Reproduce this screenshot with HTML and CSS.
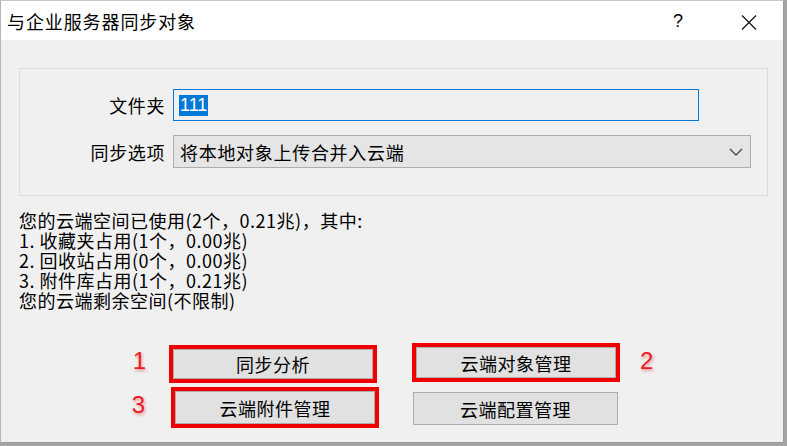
FILE: index.html
```html
<!DOCTYPE html>
<html lang="zh-CN">
<head>
    <meta charset="UTF-8">
    <title>与企业服务器同步对象</title>
    <link rel="stylesheet" href="styles.css">
</head>
<body>
    <div class="dialog">
        <div class="titlebar">
            <span class="title">与企业服务器同步对象</span>
            <span class="help">?</span>
            <span class="close">
                <svg width="16" height="15" viewBox="0 0 16 15">
                    <path d="M1 0.5 L15 14.5 M15 0.5 L1 14.5" stroke="#111" stroke-width="1.2" fill="none"/>
                </svg>
            </span>
        </div>

        <div class="content">
            <div class="group">
                <div class="row">
                    <label class="lbl">文件夹</label>
                    <div class="textbox"><span class="selected">111</span></div>
                </div>
                <div class="row">
                    <label class="lbl">同步选项</label>
                    <div class="combo">
                        <span>将本地对象上传合并入云端</span>
                        <svg class="chev" width="14" height="8" viewBox="0 0 14 8">
                            <path d="M1 1 L7 7 L13 1" stroke="#444" stroke-width="1.3" fill="none"/>
                        </svg>
                    </div>
                </div>
            </div>

            <div class="usage">
                <div>您的云端空间已使用(2个，0.21兆)，其中:</div>
                <div>1. 收藏夹占用(1个，0.00兆)</div>
                <div>2. 回收站占用(0个，0.00兆)</div>
                <div>3. 附件库占用(1个，0.21兆)</div>
                <div>您的云端剩余空间(不限制)</div>
            </div>

            <div class="actions">
                <span class="num n1">1</span>
                <div class="mark m1"><button class="btn">同步分析</button></div>
                <div class="mark m2"><button class="btn">云端对象管理</button></div>
                <span class="num n2">2</span>

                <span class="num n3">3</span>
                <div class="mark m3"><button class="btn">云端附件管理</button></div>
                <button class="btn plain">云端配置管理</button>
            </div>
        </div>
    </div>
</body>
</html>
```

FILE: styles.css
```css
body {
    margin: 0;
    background-color: #a3a3a3;
    font-family: "Noto Sans CJK SC", "Liberation Sans", sans-serif;
    color: #000;
}

.dialog {
    width: 784px;
    height: 443px;
    border: 1px solid #9a9a9a;
    border-left-color: #b5b5b5;
    border-top-color: #c8c8c8;
    background-color: #f0f0f0;
    box-sizing: border-box;
    overflow: hidden;
}

.titlebar {
    height: 39px;
    background-color: #fff;
    display: flex;
    align-items: center;
}

.title {
    flex: 1;
    padding-left: 6px;
    font-size: 18px;
    letter-spacing: 0.9px;
    line-height: 20px;
    margin-top: 1px;
}

.help {
    width: 46px;
    text-align: center;
    font-family: "Liberation Sans", sans-serif;
    font-size: 18px;
    margin-right: 25px;
    margin-top: 2px;
}

.close {
    width: 46px;
    margin-right: 11px;
    display: flex;
    justify-content: center;
    margin-top: 4px;
}

.content {
    padding: 28px 0 0 18px;
}

.group {
    width: 749px;
    height: 128px;
    box-sizing: border-box;
    border: 1px solid #dcdcdc;
    padding-top: 20px;
}

.row {
    display: flex;
    align-items: center;
    margin-bottom: 14px;
}

.lbl {
    width: 145px;
    text-align: right;
    font-size: 18px;
    letter-spacing: 0.6px;
    margin-right: 8px;
}

.textbox {
    width: 526px;
    height: 32px;
    box-sizing: border-box;
    border: 1px solid #0078d7;
    background-color: #f0f0f0;
    padding-left: 5px;
    display: flex;
    align-items: center;
}

.selected {
    background-color: #0078d7;
    color: #fff;
    font-family: "Liberation Sans", sans-serif;
    font-size: 18px;
    line-height: 21px;
    padding: 0 1px;
}

.combo {
    width: 578px;
    height: 33px;
    box-sizing: border-box;
    border: 1px solid #adadad;
    background-color: #e5e5e5;
    padding: 0 7px 0 6px;
    display: flex;
    align-items: center;
    justify-content: space-between;
    font-size: 18px;
    letter-spacing: 0.7px;
}

.usage {
    margin-top: 14px;
    font-size: 18px;
    line-height: 20px;
    letter-spacing: 0.5px;
}

.actions {
    display: grid;
    grid-template-columns: 150px 210px 33px 208px 1fr;
    grid-template-rows: 40px 41px;
    row-gap: 4px;
    margin-top: 33px;
}

.num {
    font-family: "Liberation Sans", sans-serif;
    font-size: 24px;
    color: #ea1c24;
    text-shadow: 1px 2px 3px rgba(220, 40, 40, 0.45);
    line-height: 24px;
}

.n1 {
    grid-column: 1;
    grid-row: 1;
    justify-self: end;
    padding-right: 23px;
    margin-top: 6px;
}

.n3 {
    grid-column: 1;
    grid-row: 2;
    justify-self: end;
    padding-right: 24px;
    margin-top: 6px;
}

.n2 {
    grid-column: 5;
    grid-row: 1;
    padding-left: 20px;
    margin-top: 6px;
}

.mark {
    border: 4px solid #f10000;
    box-sizing: border-box;
    width: 208px;
    display: flex;
}

.m1 {
    grid-column: 2;
    grid-row: 1;
    height: 38px;
    margin-top: 2px;
}

.m2 {
    grid-column: 4;
    grid-row: 1;
    height: 39px;
}

.m3 {
    grid-column: 2;
    grid-row: 2;
    height: 41px;
    margin-left: 2px;
}

.btn {
    flex: 1;
    border: 1px solid #adadad;
    background-color: #e1e1e1;
    font-family: "Noto Sans CJK SC", sans-serif;
    font-size: 18px;
    letter-spacing: 0.5px;
    color: #000;
    padding: 0;
    margin: 0;
}

.plain {
    grid-column: 4;
    grid-row: 2;
    width: 205px;
    height: 33px;
    margin: 5px 0 0 1px;
    flex: none;
}
```
